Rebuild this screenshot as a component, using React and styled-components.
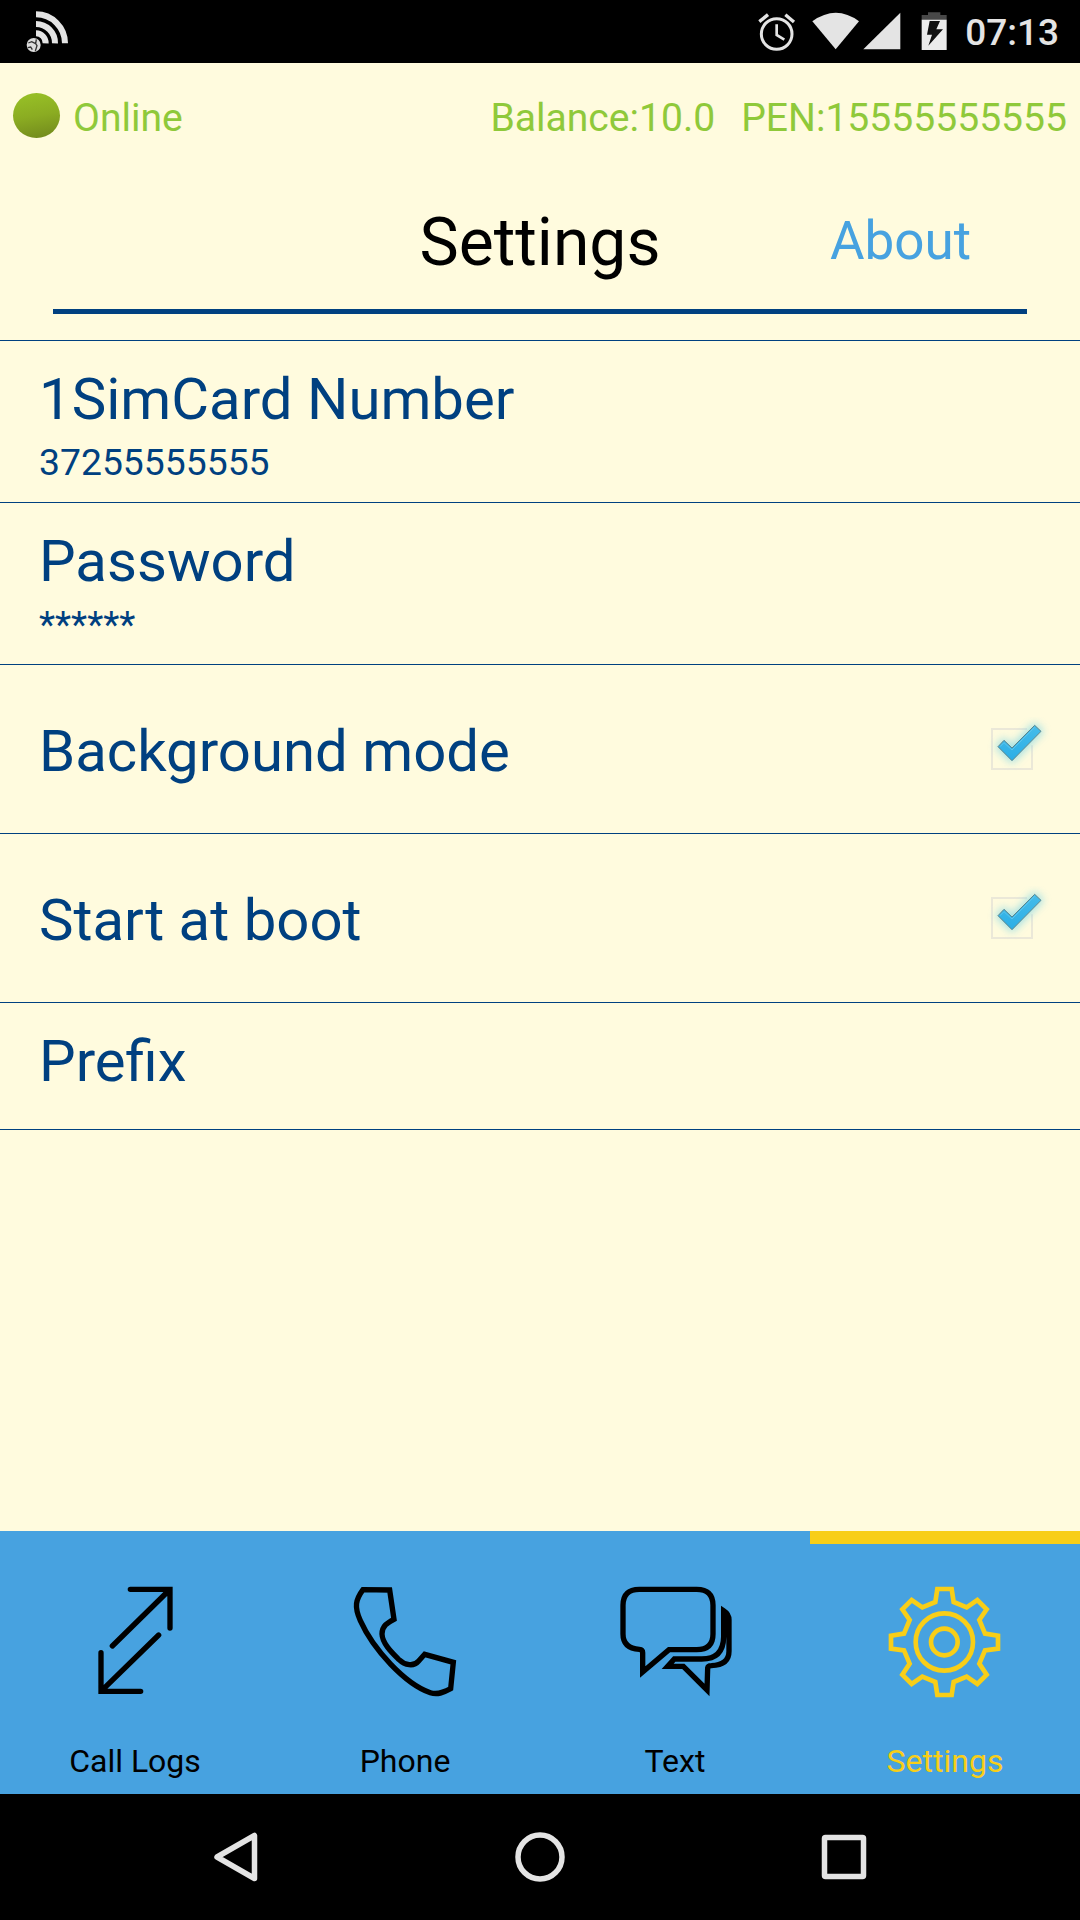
import React from "react";
import styled, { createGlobalStyle } from "styled-components";

const tabs = [
  { label: "Call Logs", icon: <CallLogsIcon /> },
  { label: "Phone", icon: <PhoneIcon /> },
  { label: "Text", icon: <TextIcon /> },
  { label: "Settings", icon: <GearIcon />, active: true },
];

function App() {
  return (
    <Screen>
      <GlobalStyle />
      <StatusBar />
      <AccountBar>
        <OnlineDot />
        <Online>Online</Online>
        <Balance>Balance:10.0</Balance>
        <span>PEN:15555555555</span>
      </AccountBar>
      <Header>
        <Title>Settings</Title>
        <About>About</About>
      </Header>
      <List>
        <Row $height={162}>
          <div>
            <Label>1SimCard Number</Label>
            <Value>37255555555</Value>
          </div>
        </Row>
        <Row $height={162}>
          <div>
            <Label>Password</Label>
            <Value>******</Value>
          </div>
        </Row>
        <Row $height={169} $toggle>
          <Label>Background mode</Label>
          <Check id="background" />
        </Row>
        <Row $height={169} $toggle>
          <Label>Start at boot</Label>
          <Check id="boot" />
        </Row>
        <Row $height={127}>
          <Label>Prefix</Label>
        </Row>
      </List>
      <TabBar>
        {tabs.map((tab) => (
          <Tab key={tab.label} $active={tab.active}>
            {tab.icon}
            <span>{tab.label}</span>
          </Tab>
        ))}
      </TabBar>
      <SystemNav />
    </Screen>
  );
}

function StatusBar() {
  return (
    <Status>
      <svg width="50" height="50" viewBox="70 20 150 150">
        <g fill="none" stroke="#e4e4e4" strokeWidth="18">
          <path d="M109 42A87 87 0 0 1 196 129" />
          <path d="M109 71A57 57 0 0 1 166 129" />
          <path d="M109 99A29 29 0 0 1 138 129" />
        </g>
        <circle cx="102" cy="134" r="21" fill="#dcdcdc" />
        <path
          d="M86 128l10-4 12 6M110 117l-2 13 4 6-5 16M84 142l9-2 5 8"
          fill="none"
          stroke="#333"
          strokeWidth="4"
        />
      </svg>
      <StatusIcons>
        <svg width="200" height="63" viewBox="100 0 600 189">
          <g fill="none" stroke="#e4e4e4">
            <circle cx="171" cy="102" r="46" strokeWidth="9" />
            <path d="M171 73V105L194 119" strokeWidth="8" />
            <path d="M119 65L145 44M197 44L223 66" strokeWidth="10" />
          </g>
          <path d="M278 64Q349 13 418 64L348 148Z" fill="#e4e4e4" />
          <path d="M542 38V148H431Z" fill="#e4e4e4" />
          <path d="M606 59V45H625V37H662V45H681V59Z" fill="#484848" />
          <path d="M606 59H681V150H606Z" fill="#ececec" />
          <path d="M630 63H661L650 88H670L626 137L637 104H622Z" fill="#111" />
        </svg>
        <Time>07:13</Time>
      </StatusIcons>
    </Status>
  );
}

function Check({ id }) {
  const shape = "M174 260L192 241L216 264L284 196L303 214L216 302Z";
  return (
    <svg width="80" height="60" viewBox="129 171 240 180">
      <defs>
        <filter id={`${id}-glow`} x="-30%" y="-30%" width="160%" height="160%">
          <feGaussianBlur stdDeviation="12" />
        </filter>
        <linearGradient id={`${id}-fill`} x1="0" y1="0" x2="0" y2="1">
          <stop offset="0" stopColor="#46bce9" />
          <stop offset="1" stopColor="#2aaee6" />
        </linearGradient>
      </defs>
      <path
        d="M261 207H156V327H276V256"
        fill="none"
        stroke="#ebe8d8"
        strokeWidth="6"
      />
      <path
        d={shape}
        fill="#7fd6e6"
        stroke="#7fd6e6"
        strokeWidth="12"
        opacity="0.75"
        filter={`url(#${id}-glow)`}
      />
      <path
        d={shape}
        fill={`url(#${id}-fill)`}
        stroke="#5d858c"
        strokeWidth="3"
        strokeLinejoin="round"
      />
      <path
        d="M180 260L192 248L216 270L284 202"
        fill="none"
        stroke="#5cc5ec"
        strokeWidth="3"
      />
    </svg>
  );
}

function CallLogsIcon() {
  return (
    <TabIcon viewBox="225 183 360 360">
      <path d="M391 208H510V324M508 210L337 378" strokeLinecap="round" />
      <path d="M303 398V514H422M305 512L476 345" strokeLinecap="round" />
      <path
        d="M484 210H510V236ZM303 488V514H329Z"
        fill="currentColor"
        stroke="none"
      />
    </TabIcon>
  );
}

function PhoneIcon() {
  return (
    <TabIcon viewBox="225 183 360 360">
      <path d="M279 209L359 210L372 298C352 308 336 318 336 342C337 371 367 399 386 418C405 436 431 441 446 423L464 403L550 427L542 506C520 518 502 525 481 518C405 492 309 387 271 302C252 260 257 239 279 209Z" />
    </TabIcon>
  );
}

function TextIcon() {
  return (
    <TabIcon viewBox="225 183 360 360">
      <path d="M298 208H470Q519 208 519 256V342Q519 389 470 389H387L308 456V398Q308 389 298 388Q249 385 249 342V256Q249 208 298 208Z" />
      <path d="M551 272V350Q550 417 485 417H403L383 439H430L501 510L503 444Q504 437 514 437C550 436 567 420 567 394V300Q567 282 551 272Z" />
    </TabIcon>
  );
}

function GearIcon() {
  return (
    <TabIcon viewBox="225 183 360 360">
      <g strokeWidth="14">
        <path d="M382 207H425L431 246L470 262L502 240L530 268L508 300L525 341L564 347V386L525 391L508 431L530 464L502 492L470 470L431 486L425 525H382L376 486L337 470L305 492L277 464L299 431L282 391L243 386V347L282 341L299 300L277 268L305 240L337 262L376 246Z" />
        <circle cx="403" cy="366" r="86" />
        <circle cx="403" cy="366" r="40" />
      </g>
    </TabIcon>
  );
}

function SystemNav() {
  return (
    <Nav>
      <svg width="60" height="60" viewBox="0 0 60 60">
        <path d="M48.5 8.5V51.5L11 30Z" strokeLinejoin="round" />
      </svg>
      <svg width="60" height="60" viewBox="0 0 60 60">
        <circle cx="30" cy="30" r="22" />
      </svg>
      <svg width="60" height="60" viewBox="0 0 60 60">
        <rect x="10.5" y="10.5" width="39" height="39" rx="1" />
      </svg>
    </Nav>
  );
}

export default App;

const GlobalStyle = createGlobalStyle`
  * {
    box-sizing: border-box;
  }

  body {
    margin: 0;
    background-color: black;
    font-family: Roboto, "Noto Sans", sans-serif;
  }

  svg {
    display: block;
    flex-shrink: 0;
  }
`;

const Screen = styled.div`
  width: 1080px;
  height: 1920px;
  display: flex;
  flex-direction: column;
  overflow: hidden;
  background-color: #fffbde;
`;

const Status = styled.div`
  height: 63px;
  padding: 0 21px 0 23px;
  display: flex;
  justify-content: space-between;
  background-color: black;

  > svg {
    margin-top: 7px;
  }
`;

const StatusIcons = styled.div`
  display: flex;
`;

const Time = styled.span`
  margin-left: 12px;
  color: #e4e4e4;
  font-size: 37px;
  font-weight: 500;
  line-height: 66px;
`;

const AccountBar = styled.div`
  height: 105px;
  padding: 0 13px;
  display: flex;
  align-items: center;
  color: #8fc93a;
  font-size: 39.1px;
  line-height: 46px;

  span {
    padding-top: 4px;
  }
`;

const OnlineDot = styled.div`
  width: 47px;
  height: 45px;
  margin-bottom: 1px;
  border-radius: 50%;
  background: linear-gradient(170deg, #96be26 10%, #8bac22 50%, #70871c 100%);
`;

const Online = styled.span`
  margin-left: 13px;
`;

const Balance = styled.span`
  margin-left: auto;
  margin-right: 26px;
`;

const Header = styled.div`
  height: 146px;
  margin: 0 53px;
  display: grid;
  grid-template-columns: 1fr auto 1fr;
  border-bottom: 5px solid #004080;
`;

const Title = styled.h1`
  grid-column: 2;
  margin: 0;
  color: black;
  font-size: 66px;
  font-weight: 400;
  line-height: 149px;
`;

const About = styled.span`
  justify-self: end;
  margin-right: 56px;
  color: #47a2e0;
  font-size: 53px;
  line-height: 146px;
`;

const List = styled.div`
  flex: 1;
  margin-top: 26px;
  border-top: 1px solid #004080;
`;

const Row = styled.div`
  height: ${(props) => props.$height}px;
  padding: ${(props) => (props.$toggle ? "52px 17px 0 39px" : "24px 39px 0")};
  display: flex;
  justify-content: space-between;
  align-items: flex-start;
  border-bottom: 1px solid #004080;
  color: #004080;
`;

const Label = styled.div`
  font-size: 58.1px;
  line-height: 68px;
`;

const Value = styled.div`
  font-size: 37.3px;
  line-height: 58px;
`;

const TabBar = styled.div`
  height: 263px;
  display: grid;
  grid-template-columns: repeat(4, 1fr);
  background-color: #47a2e0;
`;

const Tab = styled.div`
  display: flex;
  flex-direction: column;
  align-items: center;
  color: ${(props) => (props.$active ? "#f8ce18" : "black")};
  border-top: 13px solid ${(props) => (props.$active ? "#f8ce18" : "transparent")};
  font-size: 32px;
  line-height: 38px;

  span {
    margin-top: 41px;
  }
`;

const TabIcon = styled.svg`
  width: 120px;
  height: 120px;
  margin-top: 37px;
  fill: none;
  stroke: currentColor;
  stroke-width: 16;
`;

const Nav = styled.div`
  height: 126px;
  padding: 0 206px;
  display: flex;
  align-items: center;
  justify-content: space-between;
  background-color: black;

  svg {
    fill: none;
    stroke: #e4e4e4;
    stroke-width: 5.5;
  }
`;
